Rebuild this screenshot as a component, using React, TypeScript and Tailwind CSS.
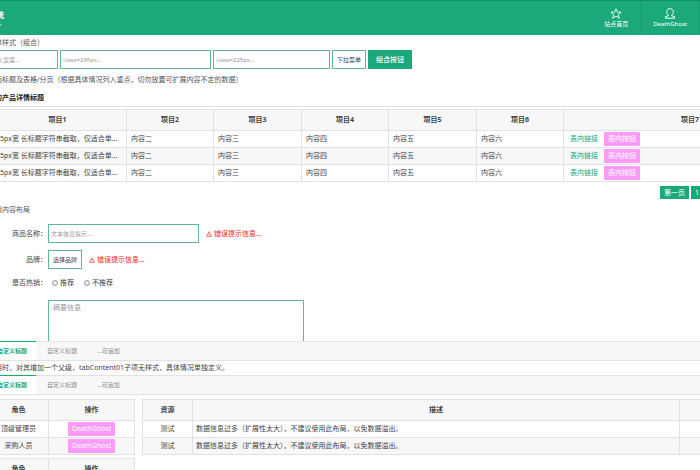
import { useState } from "react";

const COLUMNS = ["项目1", "项目2", "项目3", "项目4", "项目5", "项目6", "项目7"];
const ROWS = [1, 2, 3];
const CELLS = ["内容二", "内容三", "内容四", "内容五", "内容六"];
const ROLES = ["顶级管理员", "采购人员"];
const TABS = ["自定义标题", "自定义标题", "...可追加"];

function Header() {
  return (
    <header className="flex h-[35px] items-center justify-between border-t border-[#148f66] bg-[#1ba87b] text-white">
      <a href="#" className="-ml-3 flex flex-col gap-px whitespace-nowrap">
        <span className="text-[8px] leading-[12px] font-bold">系统</span>
        <span className="text-[4px] leading-[6px] opacity-80">System</span>
      </a>
      <nav className="flex h-full text-[6px] leading-[8px]">
        <a href="#" className="flex flex-col items-center justify-center gap-px border-r border-[#18a074] px-3">
          <svg width="12" height="11" viewBox="0 0 12 11" fill="none" stroke="currentColor" strokeWidth="0.9" strokeLinejoin="round">
            <path d="M6 0.8 7.4 4.1 11.2 4.3 8.3 6.6 9.3 10.2 6 8.2 2.7 10.2 3.7 6.6 0.8 4.3 4.6 4.1Z" />
          </svg>
          站点首页
        </a>
        <a href="#" className="flex flex-col items-center justify-center gap-px border-r border-[#18a074] px-3">
          <svg width="12" height="11" viewBox="0 0 12 11" fill="none" stroke="currentColor" strokeWidth="1" strokeLinejoin="round">
            <path d="M4.3 7C3 6 2.6 4.7 2.7 3.5 2.8 1.8 4.2.7 6 .7S9.2 1.8 9.3 3.5C9.4 4.7 9 6 7.7 7V7.8L10.6 8.7V10.2H1.4V8.7L4.3 7.8Z" />
          </svg>
          DeathGhost
        </a>
      </nav>
    </header>
  );
}

function Tabs() {
  const [active, setActive] = useState(0);

  return (
    <div className="flex h-[20px] gap-0.5 border-y border-[#e2e2e2] bg-[#f7f7f7] text-[6px]">
      {TABS.map((tab, i) => (
        <button
          key={i}
          type="button"
          onClick={() => setActive(i)}
          className={
            i === active
              ? "-mt-px border-t border-[#1ba87b] bg-white px-[9px] font-bold text-[#1ba87b]"
              : "px-[9px] text-[#888]"
          }
        >
          {tab}
        </button>
      ))}
    </div>
  );
}

function ErrorTip() {
  return (
    <span className="flex items-center gap-0.5 text-[7px] text-[#f22]">
      <svg width="6" height="6" viewBox="0 0 6 6" fill="none" stroke="currentColor" strokeWidth="0.6">
        <path d="M3 .6 5.6 5.4H.4ZM3 2.2V3.8M3 4.3V4.8" />
      </svg>
      错误提示信息...
    </span>
  );
}

function RoleTable({ rows }: { rows: string[] }) {
  return (
    <table className="w-[147px] table-fixed border-collapse text-center">
      <thead>
        <tr className="h-[21px] bg-[#f7f7f7]">
          <th className="w-[60px] border border-[#e2e2e2]">角色</th>
          <th className="border border-[#e2e2e2]">操作</th>
        </tr>
      </thead>
      <tbody>
        {rows.map((role) => (
          <tr key={role} className="h-[17px] even:bg-[#f7f7f7]">
            <td className="border border-[#e2e2e2]">{role}</td>
            <td className="border border-[#e2e2e2]">
              <button type="button" className="mx-auto block h-[14px] rounded-[1px] bg-[#fa9bfa] px-1 text-white">
                DeathGhost
              </button>
            </td>
          </tr>
        ))}
      </tbody>
    </table>
  );
}

export default function App() {
  return (
    <div className="h-screen overflow-hidden bg-white font-['Noto_Sans','Noto_Sans_CJK_SC',sans-serif] text-[7px] leading-[10px] text-[#444]">
      <Header />

      <main className="-ml-3">
        <h2 className="pt-[3px] pb-[2px] text-[#555]">表单样式（组合）</h2>
        <div className="flex h-[19px] gap-0.5 text-[6px]">
          <input aria-label="宽度" placeholder="默认宽度..." className="w-[70px] border border-[#5fb79a] px-0.5 placeholder:text-[#999]" />
          <input aria-label="295px" placeholder="class=295px..." className="w-[151px] border border-[#5fb79a] px-0.5 placeholder:text-[#999]" />
          <input aria-label="225px" placeholder="class=225px..." className="w-[117px] border border-[#5fb79a] px-0.5 placeholder:text-[#999]" />
          <select aria-label="下拉菜单" className="w-[34px] appearance-none border border-[#5fb79a] px-1">
            <option>下拉菜单</option>
          </select>
          <button type="button" className="w-[44px] bg-[#1ba87b] text-[7px] font-medium text-white">组合按钮</button>
        </div>

        <h2 className="pt-[6px] text-[#555]">页面标题及表格/分页（根据具体情况列入重点，切勿放置可扩展内容不定的数据）</h2>
        <h3 className="mt-[8px] mb-[2px] border-b border-[#ddd] pb-[3px] font-bold text-[#222]">我的产品详情标题</h3>
        <table className="w-[829px] table-fixed border-collapse">
          <thead>
            <tr className="h-[21px] bg-[#f7f7f7]">
              {COLUMNS.map((col, i) => (
                <th
                  key={col}
                  className={
                    i === 0
                      ? "w-[138px] border border-[#e2e2e2]"
                      : i === 6
                        ? "border border-[#e2e2e2]"
                        : i % 2
                          ? "w-[87px] border border-[#e2e2e2]"
                          : "w-[88px] border border-[#e2e2e2]"
                  }
                >
                  {col}
                </th>
              ))}
            </tr>
          </thead>
          <tbody>
            {ROWS.map((row) => (
              <tr key={row} className="h-[17px] even:bg-[#f7f7f7]">
                <td className="border border-[#e2e2e2] px-[3px] whitespace-nowrap">265px宽 长标题字符串截取，仅适合单...</td>
                {CELLS.map((cell) => (
                  <td key={cell} className="border border-[#e2e2e2] px-1">{cell}</td>
                ))}
                <td className="border border-[#e2e2e2] px-1.5">
                  <div className="flex items-center gap-1.5">
                    <a href="#" className="text-[#1ba87b]">表内链接</a>
                    <button type="button" className="h-[14px] rounded-[1px] bg-[#fa9bfa] px-1 text-white">表内按钮</button>
                  </div>
                </td>
              </tr>
            ))}
          </tbody>
        </table>
        <nav aria-label="分页" className="mt-1 flex gap-0.5 pl-[672px] text-white">
          <a href="#" className="shrink-0 bg-[#1ba87b] px-1 py-[2px] leading-[9px]">第一页</a>
          <a href="#" className="shrink-0 bg-[#1ba87b] px-1 py-[2px] leading-[9px]">1</a>
        </nav>

        <h2 className="pt-[6px] text-[#555]">常用内容布局</h2>
        <form className="mt-[9px] flex flex-col">
          <div className="flex h-[19px] items-center gap-[7px]">
            <label htmlFor="goods" className="-mr-[7px] w-[60px] pr-px text-right">商品名称：</label>
            <input id="goods" placeholder="文本信息提示..." className="h-full w-[151px] border border-[#5fb79a] px-0.5 text-[6px] placeholder:text-[#999]" />
            <ErrorTip />
          </div>
          <div className="mt-[7px] flex h-[19px] items-center gap-[7px]">
            <label htmlFor="brand" className="-mr-[7px] w-[60px] pr-px text-right">品牌：</label>
            <select id="brand" className="h-full w-[34px] appearance-none border border-[#5fb79a] px-1 text-[6px]">
              <option>选择品牌</option>
            </select>
            <ErrorTip />
          </div>
          <fieldset className="mt-[9px] flex items-center">
            <legend className="float-left w-[60px] pr-px text-right">是否热销：</legend>
            <label className="ml-1 flex items-center gap-0.5">
              <input type="radio" name="hot" className="size-[6px] appearance-none rounded-full border border-[#999] bg-[#eee] checked:bg-[#555]" />
              推荐
            </label>
            <label className="ml-[10px] flex items-center gap-0.5">
              <input type="radio" name="hot" className="size-[6px] appearance-none rounded-full border border-[#999] bg-[#eee] checked:bg-[#555]" />
              不推荐
            </label>
          </fieldset>
          <textarea
            aria-label="摘要信息"
            placeholder="摘要信息"
            className="mt-[12px] ml-[60px] block h-[41px] w-[256px] resize-none border border-b-0 border-[#5fb79a] px-1 py-[2px] placeholder:text-[#999]"
          />
        </form>

        <Tabs />
        <p className="py-[2px]">套用时，对其增加一个父级，tabContent01子项无样式，具体情况单独定义。</p>
        <Tabs />

        <div className="mt-1 flex gap-[7px]">
          <div className="flex shrink-0 flex-col gap-[3px]">
            <RoleTable rows={ROLES} />
            <RoleTable rows={[]} />
          </div>
          <table className="w-[675px] shrink-0 table-fixed self-start border-collapse">
            <thead>
              <tr className="h-[21px] bg-[#f7f7f7]">
                <th className="w-[50px] border border-[#e2e2e2]">资源</th>
                <th className="w-[487px] border border-[#e2e2e2]">描述</th>
                <th className="border border-[#e2e2e2]" />
              </tr>
            </thead>
            <tbody>
              {ROLES.map((role) => (
                <tr key={role} className="h-[17px] even:bg-[#f7f7f7]">
                  <td className="border border-[#e2e2e2] text-center">测试</td>
                  <td className="border border-[#e2e2e2] px-[3px]">数据信息过多（扩展性太大），不建议使用此布局，以免数据溢出。</td>
                  <td className="border border-[#e2e2e2]" />
                </tr>
              ))}
            </tbody>
          </table>
        </div>
      </main>
    </div>
  );
}
